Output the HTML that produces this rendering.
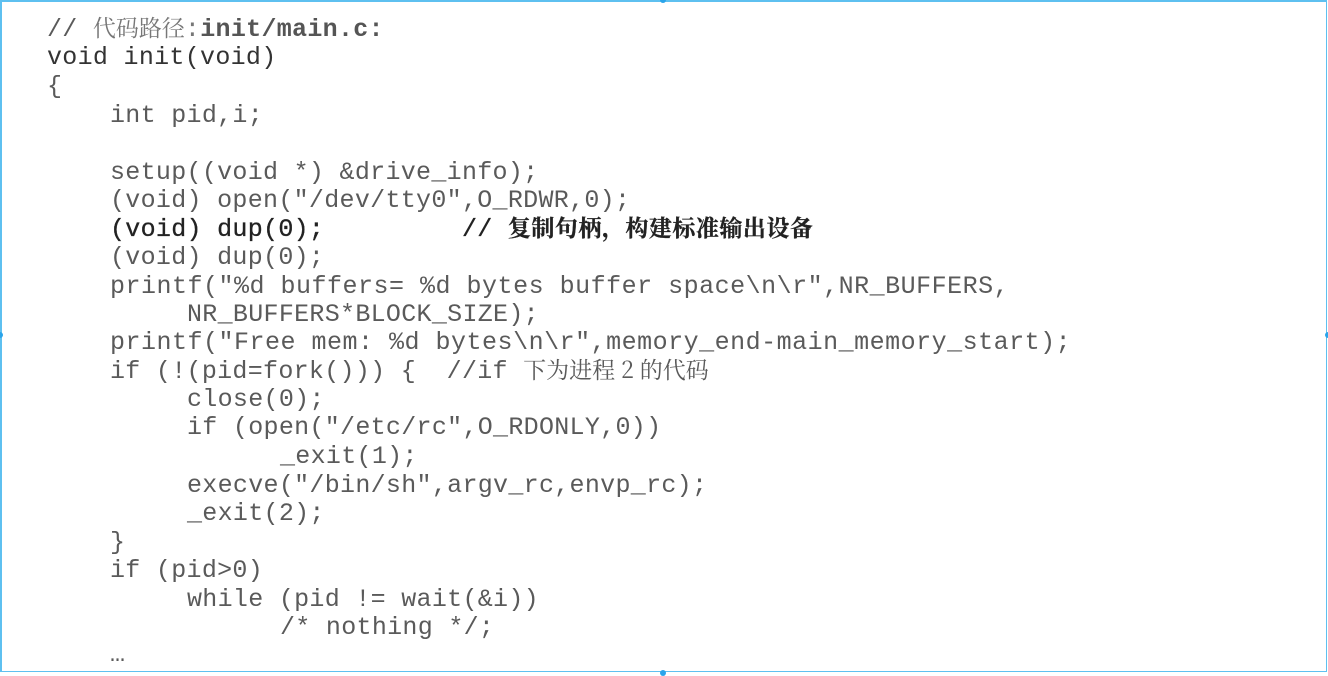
<!DOCTYPE html>
<html><head><meta charset="utf-8"><style>
html,body{margin:0;padding:0;background:#fff;}
body{width:1328px;height:673px;position:relative;overflow:hidden;}
.frame{position:absolute;left:0;top:0;width:1324px;height:669px;border:2px solid #5ec0f0;border-right-width:1px;border-bottom-width:1px;}
.dot{position:absolute;width:6px;height:6px;border-radius:3px;background:#2aa4ea;}
.l{position:absolute;font-family:"Liberation Mono","Noto Sans CJK SC",monospace;font-size:25px;letter-spacing:0.3px;line-height:28px;color:#5a5a5a;white-space:pre;}
.b{color:#222;font-weight:bold;}
.cn{font-family:"Noto Serif CJK SC","Noto Sans CJK SC",sans-serif;font-size:23px;letter-spacing:1px;line-height:0;}
</style></head><body>
<div class="frame"></div>
<div class="dot" style="left:660px;top:-3px"></div>
<div class="dot" style="left:-3px;top:332px"></div>
<div class="dot" style="left:1325px;top:332px"></div>
<div class="dot" style="left:660px;top:670px"></div>

<div class="l" style="left:47px;top:16px"><span>// </span><span class="cn" style="color:#777;letter-spacing:0">代码路径</span><span style="color:#777">:</span><span class="b" style="color:#555">init/main.c:</span></div>
<div class="l" style="left:47px;top:44px;color:#333">void init(void)</div>
<div class="l" style="left:47px;top:73px">{</div>
<div class="l" style="left:110px;top:102px">int pid,i;</div>
<div class="l" style="left:110px;top:159px">setup((void *) &amp;drive_info);</div>
<div class="l" style="left:110px;top:187px">(void) open("/dev/tty0",O_RDWR,0);</div>
<div class="l" style="left:110px;top:216px;color:#222;-webkit-text-stroke:0.3px #222">(void) dup(0);         // <span class="cn b" style="letter-spacing:0.5px">复制句柄，构建标准输出设备</span></div>
<div class="l" style="left:110px;top:244px">(void) dup(0);</div>
<div class="l" style="left:110px;top:273px;letter-spacing:0.5px">printf("%d buffers= %d bytes buffer space\n\r",NR_BUFFERS,</div>
<div class="l" style="left:187px;top:301px">NR_BUFFERS*BLOCK_SIZE);</div>
<div class="l" style="left:110px;top:329px;letter-spacing:0.5px">printf("Free mem: %d bytes\n\r",memory_end-main_memory_start);</div>
<div class="l" style="left:110px;top:358px">if (!(pid=fork())) {  //if <span class="cn" style="letter-spacing:0">下为进程 2 的代码</span></div>
<div class="l" style="left:187px;top:386px">close(0);</div>
<div class="l" style="left:187px;top:414px">if (open("/etc/rc",O_RDONLY,0))</div>
<div class="l" style="left:280px;top:443px">_exit(1);</div>
<div class="l" style="left:187px;top:472px">execve("/bin/sh",argv_rc,envp_rc);</div>
<div class="l" style="left:187px;top:500px">_exit(2);</div>
<div class="l" style="left:110px;top:529px">}</div>
<div class="l" style="left:110px;top:557px">if (pid&gt;0)</div>
<div class="l" style="left:187px;top:586px">while (pid != wait(&amp;i))</div>
<div class="l" style="left:280px;top:614px">/* nothing */;</div>
<div class="l" style="left:110px;top:641px">…</div>
</body></html>
